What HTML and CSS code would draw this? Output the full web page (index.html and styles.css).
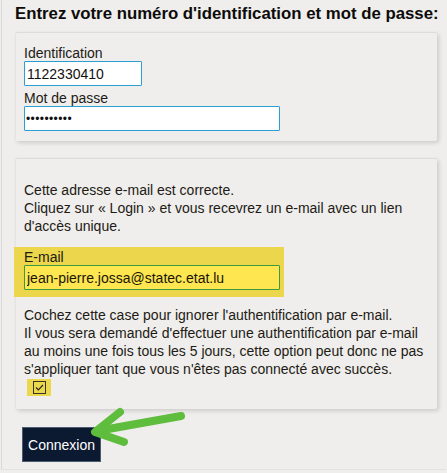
FILE: index.html
```html
<!DOCTYPE html>
<html lang="fr">
<head>
<meta charset="utf-8">
<title>Connexion</title>
<link rel="stylesheet" href="styles.css">
</head>
<body>
<div class="page">
  <h1 class="title">Entrez votre numéro d'identification et mot de passe:</h1>

  <div class="panel panel-login">
    <label class="lbl" for="ident">Identification</label>
    <input class="inp inp-short" id="ident" type="text" value="1122330410">
    <label class="lbl lbl-gap" for="pwd">Mot de passe</label>
    <input class="inp inp-long inp-pwd" id="pwd" type="password" value="abcdefghij">
  </div>

  <div class="panel panel-mail">
    <p class="txt">Cette adresse e-mail est correcte.<br>Cliquez sur « Login » et vous recevrez un e-mail avec un lien<br>d'accès unique.</p>
    <div class="hl-email">
      <label class="lbl" for="mail">E-mail</label>
      <input class="inp inp-long inp-mail" id="mail" type="text" value="jean-pierre.jossa@statec.etat.lu">
    </div>
    <p class="txt txt-skip">Cochez cette case pour ignorer l'authentification par e-mail.<br>Il vous sera demandé d'effectuer une authentification par e-mail<br>au moins une fois tous les 5 jours, cette option peut donc ne pas<br>s'appliquer tant que vous n'êtes pas connecté avec succès.</p>
    <span class="hl-check">
      <svg class="check" width="13" height="13" viewBox="0 0 13 13">
        <rect x="0.5" y="0.5" width="12" height="12" fill="none" stroke="#3a3324" stroke-width="1"/>
        <path d="M3 6.5 L5.3 8.8 L10 4" fill="none" stroke="#2a2418" stroke-width="1.2"/>
      </svg>
    </span>
  </div>

  <button class="btn" type="button">Connexion</button>

  <svg class="arrow" width="110" height="50" viewBox="0 0 110 50">
    <g fill="none" stroke="#5ebd3c" stroke-width="8" stroke-linecap="round" stroke-linejoin="round">
      <path d="M96 9 L12 24"/>
      <path d="M35 5 L10 25 L39 35"/>
    </g>
  </svg>
</div>
</body>
</html>
```

FILE: styles.css
```css
html, body {
  margin: 0;
  padding: 0;
  background: #efeeec;
}

body {
  font-family: "Liberation Sans", Arial, sans-serif;
  color: #1e1a16;
}

.page {
  position: relative;
  margin-left: 1px;
  width: 445px;
  height: 470px;
  border-left: 1px solid #d9d9d8;
  border-bottom: 1px solid #e2e2e1;
  box-sizing: border-box;
}

.title {
  margin: 0;
  padding: 4px 0 0 13px;
  font-size: 16.8px;
  line-height: 20px;
  font-weight: bold;
  color: #0d0b0a;
  white-space: nowrap;
}

.panel {
  margin-left: 13px;
  width: 422px;
  box-sizing: border-box;
  background: #efeeec;
  border-top: 1px solid #dcdcdb;
  border-left: 1px solid #e4e4e3;
  box-shadow: 2px 2px 4px rgba(0, 0, 0, 0.14);
  border-radius: 2px;
  padding: 12px 4px 10px 8px;
  display: flex;
  flex-direction: column;
  align-items: flex-start;
}

.panel-login {
  margin-top: 8px;
  height: 109px;
}

.panel-mail {
  margin-top: 17px;
  height: 251px;
  padding-top: 22px;
}

.lbl {
  display: block;
  font-size: 14px;
  line-height: 16px;
  color: #221a14;
}

.lbl-gap {
  margin-top: 4px;
}

.inp {
  display: block;
  box-sizing: border-box;
  height: 25px;
  margin: 0;
  padding: 0 2px;
  border: 1px solid #2a9fd0;
  background: #ffffff;
  font-family: "Liberation Sans", Arial, sans-serif;
  font-size: 14px;
  color: #111;
  outline: none;
  border-radius: 1px;
}

.inp-pwd {
  padding-left: 1px;
  font-size: 12px;
  letter-spacing: 0.4px;
}

.inp-short {
  width: 118px;
}

.inp-long {
  width: 256px;
}

.txt {
  margin: 0;
  font-size: 14px;
  line-height: 18px;
  color: #221a14;
  white-space: nowrap;
}

.hl-email {
  margin: 12px 0 0 -10px;
  padding: 2px 4px 7px 10px;
  background: #ebd64c;
}

.inp-mail {
  background: #fde64f;
  border-color: #3c9a3a;
  color: #1a1408;
}

.txt-skip {
  margin-top: 9px;
}

.hl-check {
  margin: 1px 0 0 3px;
  width: 24px;
  height: 17px;
  background: #ebd84c;
  display: flex;
  align-items: center;
  justify-content: center;
}

.check {
  display: block;
}

.btn {
  display: block;
  margin: 18px 0 0 20px;
  width: 79px;
  height: 35px;
  padding: 0;
  background: #0b1a31;
  border: 1px solid #4b5a6e;
  color: #ffffff;
  font-family: "Liberation Sans", Arial, sans-serif;
  font-size: 14px;
  cursor: pointer;
}

.arrow {
  position: absolute;
  left: 83px;
  top: 407px;
}
```
